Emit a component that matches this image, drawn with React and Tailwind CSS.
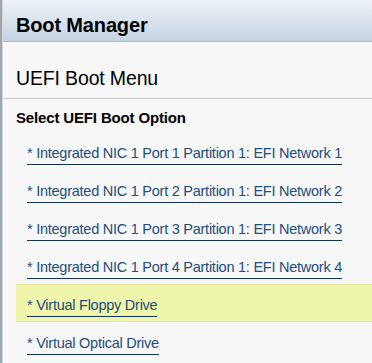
const items = [
  { label: "* Integrated NIC 1 Port 1 Partition 1: EFI Network 1" },
  { label: "* Integrated NIC 1 Port 2 Partition 1: EFI Network 2" },
  { label: "* Integrated NIC 1 Port 3 Partition 1: EFI Network 3" },
  { label: "* Integrated NIC 1 Port 4 Partition 1: EFI Network 4" },
  { label: "* Virtual Floppy Drive", selected: true },
  { label: "* Virtual Optical Drive" },
];

const font = { fontFamily: '"Liberation Sans", Arial, sans-serif' };

export default function App() {
  return (
    <div className="w-[372px] h-[363px] overflow-hidden bg-[#f7f7f8] border-l-2 border-[#9ea5ac]" style={font}>
      <div className="h-full border-l border-[#d3d7db]">
        {/* page title bar */}
        <div className="h-[42px] pl-[13px] pt-[9px] bg-gradient-to-b from-[#eef3f8] to-[#c5d4e3] border-b border-[#aebdcc]">
          <h1 className="text-[20px] leading-[33px] font-bold tracking-[-0.15px] text-black">Boot Manager</h1>
        </div>

        <div className="pt-[23px] pb-[7px] border-b border-[#c8ccd0]">
          <h2 className="pl-[13px] text-[19.5px] leading-[26px] tracking-[-0.15px] text-black">UEFI Boot Menu</h2>
        </div>

        <div className="pt-[9px] pl-[13px] mb-[4px]">
          <h3 className="text-[15px] leading-[20px] font-bold tracking-[-0.15px] text-black">Select UEFI Boot Option</h3>
        </div>

        <ul className="pl-[13px]">
          {items.map((item, i) => (
            <li
              key={i}
              className={`flex items-start h-[38px] pl-[11px] ${item.selected ? "bg-[#eff5aa] border-y border-[#e2e79c] pt-[11px]" : "pt-[12px]"}`}
            >
              <span className="text-[14.5px] leading-[18px] tracking-[-0.25px] text-[#224d7d] pb-[2px] border-b border-[#14315a] whitespace-nowrap">
                {item.label}
              </span>
            </li>
          ))}
        </ul>
      </div>
    </div>
  );
}
